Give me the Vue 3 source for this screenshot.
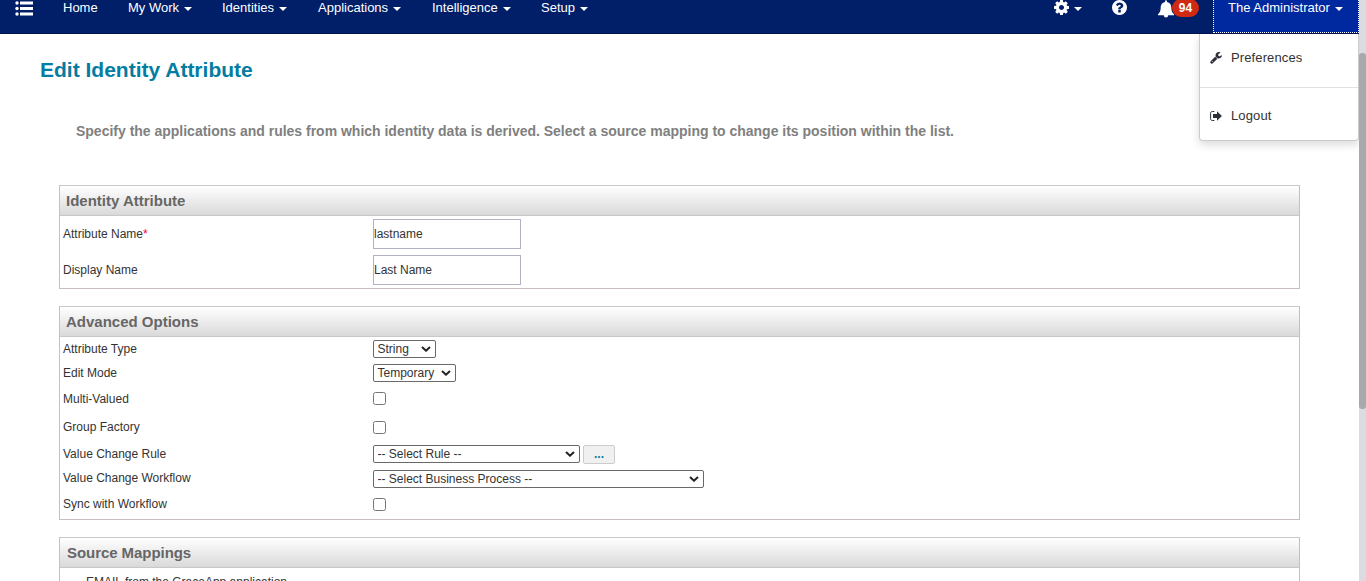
<script setup>
const menu = [
  { name: 'Home', width: 65 },
  { name: 'My Work', caret: true, width: 94 },
  { name: 'Identities', caret: true, width: 96 },
  { name: 'Applications', caret: true, width: 114 },
  { name: 'Intelligence', caret: true, width: 109 },
  { name: 'Setup', caret: true, width: 60 },
]
const options = [
  { label: 'Attribute Type', kind: 'select', value: 'String', width: 63, height: 24 },
  { label: 'Edit Mode', kind: 'select', value: 'Temporary', width: 83, height: 24 },
  { label: 'Multi-Valued', kind: 'check', height: 28, up: true },
  { label: 'Group Factory', kind: 'check', height: 28 },
  { label: 'Value Change Rule', kind: 'select', value: '-- Select Rule --', width: 207, height: 25, more: true },
  { label: 'Value Change Workflow', kind: 'select', value: '-- Select Business Process --', width: 331, height: 25, raised: true },
  { label: 'Sync with Workflow', kind: 'check', height: 26 },
]
</script>

<template>
  <div class="window">
    <div class="page">
      <nav class="navbar">
        <svg class="list-icon" viewBox="0 0 18 17" width="18" height="17">
          <g fill="#fff">
            <circle cx="2" cy="3" r="1.7" /><circle cx="2" cy="8.500" r="1.7" /><circle cx="2" cy="14" r="1.7" />
            <rect x="5" y="1.500" width="13" height="3" /><rect x="5" y="7" width="13" height="3" /><rect x="5" y="12.500" width="13" height="3" />
          </g>
        </svg>
        <div class="links">
          <a v-for="m in menu" :key="m.name" :style="{ width: m.width + 'px' }">{{ m.name }}<i v-if="m.caret" class="caret"></i></a>
        </div>
        <div class="tools">
          <svg class="cog" viewBox="128 128 1536 1536" width="15" height="15"><path fill="#fff" d="M1152 896q0-106-75-181t-181-75-181 75-75 181 75 181 181 75 181-75 75-181zm512-109v222q0 12-8 23t-20 13l-185 28q-19 54-39 91 35 50 107 138 10 12 10 25t-9 23q-27 37-99 108t-94 71q-12 0-26-9l-138-108q-44 23-91 38-16 136-29 186-7 28-36 28h-222q-14 0-24.500-8.500t-11.500-21.500l-28-184q-49-16-90-37l-141 107q-10 9-25 9-14 0-25-11-126-114-165-168-7-10-7-23 0-12 8-23 15-21 51-66.500t54-70.500q-27-50-41-99l-183-27q-13-2-21-12.500t-8-23.500v-222q0-12 8-23t19-13l186-28q14-46 39-92-40-57-107-138-10-12-10-24 0-10 9-23 26-36 98.500-107.500t94.500-71.500q13 0 26 10l138 107q44-23 91-38 16-136 29-186 7-28 36-28h222q14 0 24.500 8.500t11.500 21.500l28 184q49 16 90 37l142-107q9-9 24-9 13 0 25 10 129 119 165 170 7 8 7 22 0 12-8 23-15 21-51 66.500t-54 70.500q26 50 41 98l183 28q13 2 21 12.500t8 23.500z" /></svg>
          <i class="caret cog-caret"></i>
          <svg class="help" viewBox="128 128 1536 1536" width="15" height="15"><path fill="#fff" d="M1024 1376v-192q0-14-9-23t-23-9h-192q-14 0-23 9t-9 23v192q0 14 9 23t23 9h192q14 0 23-9t9-23zm256-672q0-88-55.500-163t-138.500-116-170-41q-243 0-371 213-15 24 8 42l132 100q7 6 19 6 16 0 25-12 53-68 86-92 34-24 86-24 48 0 85.500 26t37.500 59q0 38-20 61t-68 45q-63 28-115.500 86.500t-52.500 125.500v36q0 14 9 23t23 9h192q14 0 23-9t9-23q0-19 21.500-49.500t54.500-49.500q32-18 49-28.500t46-35 44.500-48 28-60.500 12.500-81zm384 192q0 209-103 385.500t-279.500 279.500-385.500 103-385.500-103-279.500-279.500-103-385.500 103-385.500 279.500-279.500 385.500-103 385.500 103 279.500 279.500 103 385.500z" /></svg>
          <svg class="bell" viewBox="0 0 16 18" width="16" height="18"><path fill="#fff" d="M7 1.200a1 1 0 0 1 2 0v.8c2.800.5 4.300 2.700 4.300 5.200 0 3.600.9 5.500 2.700 7v1H0v-1c1.800-1.500 2.700-3.400 2.700-7C2.700 4.700 4.200 2.500 7 2zM5.800 15.200h4.400a2.200 2.200 0 0 1-4.400 0z" /></svg>
          <span class="count">94</span>
        </div>
        <div class="user">The Administrator<i class="caret"></i></div>
      </nav>

      <div class="dropdown">
        <div class="entry first">
          <svg viewBox="64 128 1664 1664" width="12" height="12"><path fill="#2c3038" d="M448 1472q0-26-19-45t-45-19-45 19-19 45 19 45 45 19 45-19 19-45zm644-420l-682 682q-37 37-90 37-52 0-91-37l-106-108q-38-36-38-90 0-53 38-91l681-681q39 98 114.500 173.500t173.500 114.500zm634-435q0 39-23 106-47 134-164.500 217.500t-258.500 83.500q-185 0-316.500-131.500t-131.500-316.500 131.500-316.500 316.500-131.500q58 0 121.500 16.500t107.500 46.500q16 11 16 28t-16 28l-293 169v224l193 107q5-3 79-48.500t135.500-81 70.500-35.500q15 0 23.500 10t8.500 25z" /></svg>
          <span>Preferences</span>
        </div>
        <div class="entry">
          <svg viewBox="0 0 12 12" width="12" height="12"><path d="M4.300 1.500H2.300C1.300 1.500.6 2.100.6 3.200v5.600c0 1.100.7 1.700 1.700 1.700h2" fill="none" stroke="#2c3038" stroke-width="1" /><path d="M3 4H7V1.300L11.900 6 7 10.700V8H3z" fill="#2c3038" /></svg>
          <span>Logout</span>
        </div>
      </div>

      <h1>Edit Identity Attribute</h1>
      <p class="intro">Specify the applications and rules from which identity data is derived. Select a source mapping to change its position within the list.</p>

      <section class="panel identity">
        <h2>Identity Attribute</h2>
        <div class="field"><label>Attribute Name<b>*</b></label><input type="text" value="lastname" /></div>
        <div class="field"><label>Display Name</label><input type="text" value="Last Name" /></div>
      </section>

      <section class="panel advanced">
        <h2>Advanced Options</h2>
        <div v-for="o in options" :key="o.label" class="option" :style="{ height: o.height + 'px' }">
          <label :class="{ raised: o.raised }">{{ o.label }}</label>
          <div v-if="o.kind === 'select'" class="select" :style="{ width: o.width + 'px' }">
            <span>{{ o.value }}</span>
            <svg viewBox="0 0 10 6" width="10" height="6"><path d="M1 1l4 3.700L9 1" fill="none" stroke="#222" stroke-width="2" /></svg>
          </div>
          <input v-else type="checkbox" :class="{ up: o.up }" />
          <button v-if="o.more">...</button>
        </div>
      </section>

      <section class="panel mappings">
        <h2>Source Mappings</h2>
        <div class="mapping">EMAIL from the GraceApp application</div>
      </section>
    </div>
    <div class="scrollbar"><div class="thumb"></div></div>
  </div>
</template>

<style>
body { margin: 0; background: #fff; }
</style>

<style scoped>
* { box-sizing: border-box; }
.window {
  display: flex;
  height: 581px;
  overflow: hidden;
  font-family: "Liberation Sans", Arial, sans-serif;
  font-size: 12px;
  color: #333;
}
.page { position: relative; width: 1359px; height: 581px; overflow: hidden; }
.navbar {
  display: flex;
  height: 34px;
  padding-left: 15px;
  background: #011e69;
  border-bottom: 1px solid #00134f;
  color: #fff;
  font-size: 13px;
  line-height: 16px;
}
.list-icon { flex: none; }
.links { display: flex; margin-left: 30px; }
.links a { flex: none; white-space: nowrap; }
.caret {
  display: inline-block;
  margin-left: 5px;
  vertical-align: 1px;
  border: 4px solid transparent;
  border-top-color: #fff;
  border-bottom: 0;
}
.tools { display: flex; margin-left: 453px; }
.tools svg { flex: none; }
.cog-caret { margin: 7px 0 0 5px; height: 4px; }
.help { margin-left: 30px; }
.bell { margin-left: 31px; }
.count {
  width: 27px;
  height: 18px;
  margin: -1px 0 0 -2px;
  border-radius: 9px;
  background: #d22a12;
  font-size: 12px;
  font-weight: bold;
  line-height: 18px;
  text-align: center;
}
.user {
  width: 146px;
  height: 33px;
  margin-left: auto;
  padding-left: 14px;
  background: #0029a0;
  border: 1px dotted #fff;
  border-top: 0;
  white-space: nowrap;
}
.dropdown {
  position: absolute;
  top: 34px;
  right: 0;
  width: 160px;
  height: 107px;
  background: #fff;
  border: 1px solid #ccc;
  border-top: 0;
  border-radius: 0 0 4px 4px;
  box-shadow: 0 4px 8px rgba(0, 0, 0, .14);
  font-size: 13px;
}
.entry { display: flex; align-items: center; height: 52px; padding: 3px 0 0 10px; gap: 9px; }
.entry.first { height: 54px; padding: 0 0 6px 10px; border-bottom: 1px solid #e1e1e1; }
.entry span { letter-spacing: .12px; line-height: 16px; }
h1 {
  margin: 24px 0 0 40px;
  color: #037da1;
  font-size: 21px;
  line-height: 24px;
}
.intro {
  margin: 41px 0 0 76px;
  color: #808080;
  font-size: 14px;
  font-weight: bold;
  line-height: 16px;
  letter-spacing: -.008px;
  white-space: nowrap;
}
.panel { width: 1241px; margin-left: 59px; border: 1px solid #c8bebf; border-top-color: #c8c8c8; }
.identity { height: 104px; margin-top: 46px; }
.advanced { height: 214px; margin-top: 17px; }
.mappings { height: 90px; margin-top: 17px; }
h2 {
  height: 30px;
  margin: 0;
  padding-left: 6px;
  background: linear-gradient(#fff, #d9d9d9);
  border-bottom: 1px solid #c8c8c8;
  color: #666;
  font-size: 15px;
  line-height: 29px;
}
.mappings h2 { padding-left: 7px; letter-spacing: -.06px; }
.field { display: flex; align-items: center; height: 36px; padding-left: 3px; }
label { width: 310px; flex: none; }
label.raised { padding-bottom: 2px; }
label b { color: #f00040; font-weight: normal; }
input[type="text"] {
  width: 148px;
  height: 30px;
  padding: 0;
  border: 1px solid #b1b3c5;
  font: inherit;
  color: #333;
}
.option { display: flex; align-items: center; padding-left: 3px; }
.select {
  display: flex;
  align-items: center;
  justify-content: space-between;
  height: 18px;
  padding: 0 4px;
  border: 1px solid #696969;
  border-radius: 2px;
  white-space: nowrap;
}
.select span { margin-left: -.5px; }
input[type="checkbox"] { width: 13px; height: 13px; margin: 0; }
input.up { margin-bottom: 1px; }
button {
  width: 32px;
  height: 19px;
  margin: 1px 0 0 3px;
  padding: 0;
  border: 1px solid #ccc;
  border-radius: 2px;
  background: #f0f0f0;
  color: #037da1;
  font: bold 12px/14px "Liberation Sans", Arial, sans-serif;
}
.mapping { padding: 6px 0 0 26px; line-height: 16px; }
.scrollbar { width: 7px; height: 581px; padding-top: 53px; background: #dadce0; }
.thumb { height: 356px; border-radius: 3px; background: #a8a9aa; }
</style>
